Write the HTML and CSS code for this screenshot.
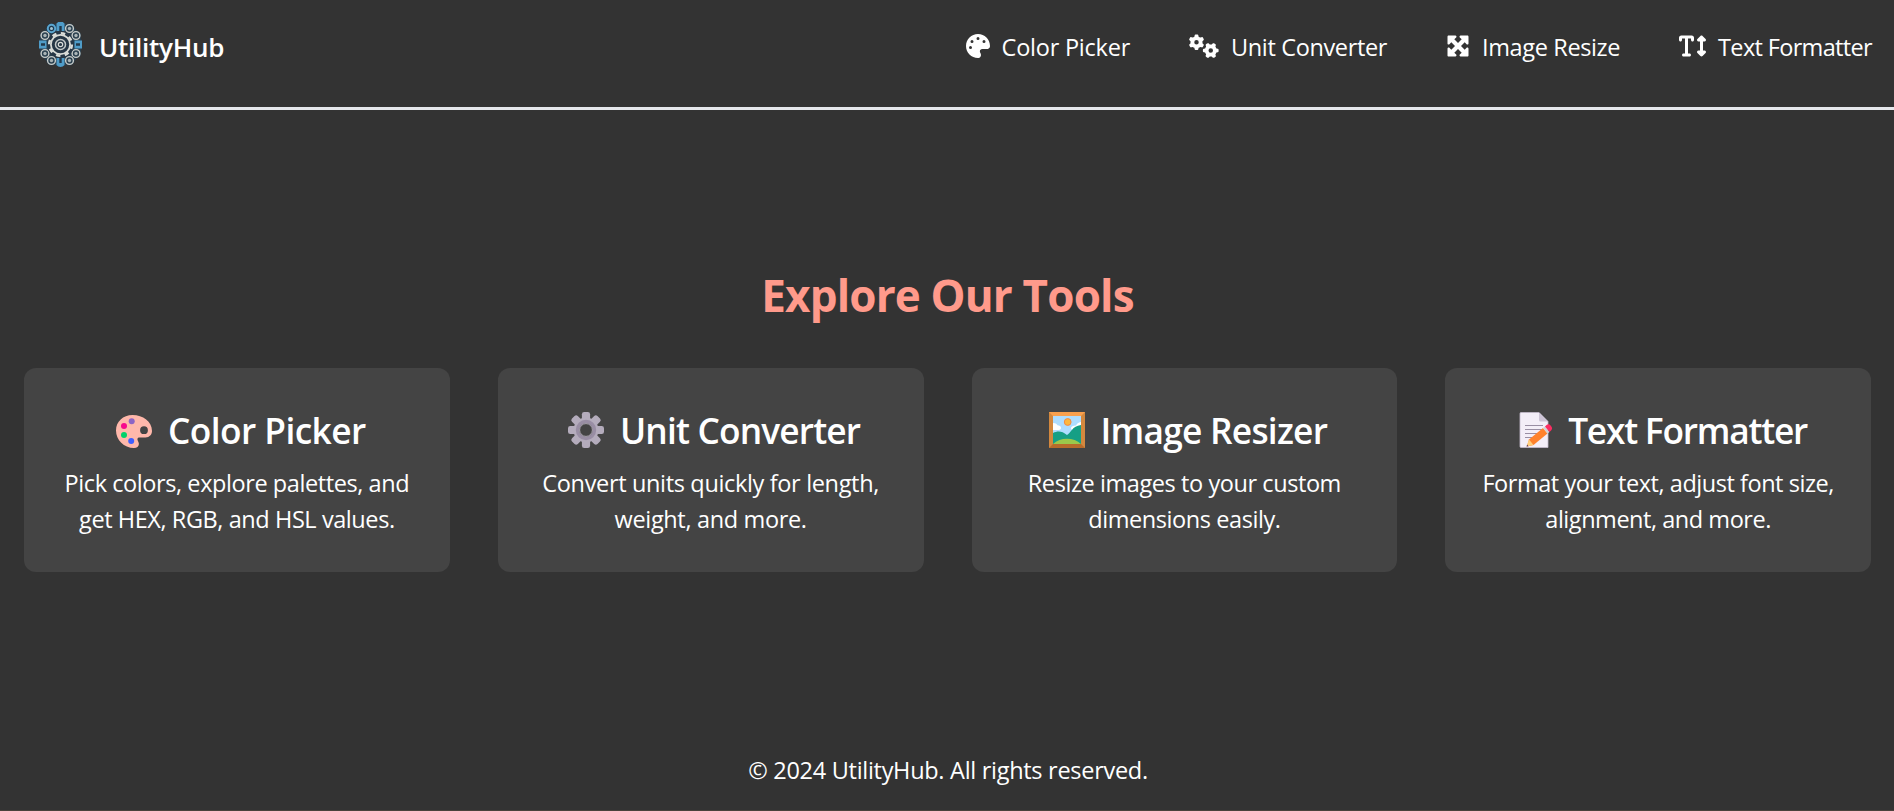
FILE: index.html
```html
<!DOCTYPE html>
<html lang="en">
<head>
<meta charset="utf-8">
<title>UtilityHub</title>
<link rel="stylesheet" href="styles.css">
</head>
<body>
<header class="header">
  <a class="brand">
    <svg class="logo" viewBox="0 0 45 45">
      <defs>
        <g id="cog"><circle r="5" fill="#2b4150"/><circle r="3.9" fill="none" stroke="#c9cdca" stroke-width="1.400"/><circle r="1.700" fill="#a9b4b6"/></g>
        <g id="bluecog"><circle r="5" fill="#1f3a50"/><circle r="3.700" fill="none" stroke="#5aa5cf" stroke-width="2"/><circle r="1.500" fill="#a5c4d2"/></g>
      </defs>
      <circle cx="22.500" cy="22.500" r="21.500" fill="#2a3f4e"/>
      <use href="#cog" x="31.500" y="6.500"/><use href="#cog" x="38" y="13.500"/>
      <use href="#cog" x="38" y="31.500"/><use href="#cog" x="31.500" y="38.500"/>
      <use href="#cog" x="13.500" y="38.500"/><use href="#cog" x="7" y="31.500"/>
      <use href="#cog" x="7" y="13.500"/><use href="#bluecog" x="13.500" y="6.500"/>
      <path d="M18.500 9V1.500a5 5 0 0 1 8 0V9zM18.500 36v7a5 5 0 0 0 8 0v-7zM1 18.500h7.500v8H1zM44 18.500h-7.500v8H44z" fill="#4f9cc8"/>
      <path d="M21.300 9V4h2.400v5zM21.300 36v5h2.400v-5zM3 21.300h4v2.400H3zM42 21.300h-4v2.400h4z" fill="#22384a"/>
      <circle cx="22.500" cy="22.500" r="13.500" fill="#263746"/>
      <circle cx="22.500" cy="22.500" r="11.300" fill="none" stroke="#d9dcd8" stroke-width="2.600" stroke-dasharray="4.400 4.475"/>
      <circle cx="22.500" cy="22.500" r="9.600" fill="none" stroke="#d9dcd8" stroke-width="1.800"/>
      <circle cx="22.500" cy="22.500" r="5" fill="none" stroke="#c3c9c8" stroke-width="1.500"/>
      <circle cx="22.500" cy="22.500" r="2.200" fill="none" stroke="#d9dcd8" stroke-width="1.200"/>
    </svg>
    <span class="brand-name">UtilityHub</span>
  </a>
  <nav class="nav">
    <a class="nav-item">
      <svg class="icon icon-palette" viewBox="0 0 512 512"><path d="M512 256c0 .9 0 1.800 0 2.700c-.4 36.500-33.600 61.300-70.100 61.300L344 320c-26.500 0-48 21.500-48 48c0 3.400 .4 6.700 1 9.900c2.100 10.200 6.500 20 10.800 29.900c6.100 13.800 12.100 27.500 12.100 42c0 31.800-21.600 60.700-53.400 62c-3.500 .1-7 .2-10.600 .2C114.600 512 0 397.400 0 256S114.600 0 256 0S512 114.600 512 256zM128 288a32 32 0 1 0 -64 0 32 32 0 1 0 64 0zm0-96a32 32 0 1 0 0-64 32 32 0 1 0 0 64zM288 96a32 32 0 1 0 -64 0 32 32 0 1 0 64 0zm96 96a32 32 0 1 0 0-64 32 32 0 1 0 0 64z"/></svg>
      <span class="label label-color">Color Picker</span>
    </a>
    <a class="nav-item">
      <svg class="icon icon-gears" viewBox="0 0 640 512">
        <defs><path id="gear" d="M308.500 135.300c7.100-6.300 9.900-16.200 6.200-25c-2.300-5.300-4.800-10.500-7.600-15.500L304 89.400c-3-5-6.300-9.900-9.800-14.600c-5.700-7.600-15.700-10.100-24.700-7.100l-28.200 9.300c-10.700-8.800-23-16-36.200-20.900L199 27.100c-1.900-9.300-9.100-16.700-18.500-17.800C173.900 8.400 167.200 8 160.400 8h-.7c-6.800 0-13.500 .4-20.100 1.200c-9.400 1.100-16.600 8.600-18.500 17.800L115 56.100c-13.300 5-25.500 12.100-36.200 20.900L50.500 67.800c-9-3-19-.5-24.700 7.100c-3.500 4.700-6.800 9.600-9.900 14.600l-3 5.300c-2.800 5-5.300 10.200-7.600 15.600c-3.700 8.700-.9 18.600 6.200 25l22.200 19.800C32.600 161.900 32 168.900 32 176s.6 14.100 1.700 20.900L11.500 216.700c-7.100 6.300-9.900 16.200-6.200 25c2.300 5.300 4.800 10.500 7.600 15.600l3 5.200c3 5.100 6.300 9.900 9.900 14.600c5.700 7.600 15.700 10.100 24.700 7.100l28.200-9.300c10.700 8.800 23 16 36.200 20.900l6.100 29.100c1.900 9.300 9.100 16.700 18.500 17.800c6.700 .8 13.500 1.200 20.400 1.200s13.700-.4 20.400-1.200c9.400-1.100 16.600-8.600 18.500-17.800l6.100-29.100c13.300-5 25.500-12.100 36.200-20.900l28.200 9.300c9 3 19 .5 24.700-7.100c3.500-4.700 6.800-9.500 9.800-14.600l3.100-5.400c2.800-5 5.300-10.200 7.600-15.500c3.700-8.700 .9-18.600-6.200-25l-22.200-19.800c1.100-6.800 1.700-13.800 1.700-20.900s-.6-14.100-1.700-20.900l22.200-19.800zM112 176a48 48 0 1 1 96 0 48 48 0 1 1 -96 0z"/></defs>
        <use href="#gear"/><use href="#gear" transform="translate(464 352) rotate(90) translate(-160 -176)"/>
      </svg>
      <span class="label label-unit">Unit Converter</span>
    </a>
    <a class="nav-item">
      <svg class="icon icon-expand" viewBox="0 0 512 512"><path d="M200 32H56C42.700 32 32 42.700 32 56V200c0 9.700 5.800 18.500 14.800 22.200s19.300 1.700 26.200-5.200l40-40 79 79-79 79L73 295c-6.900-6.900-17.200-8.900-26.200-5.200S32 302.300 32 312V456c0 13.300 10.700 24 24 24H200c9.700 0 18.500-5.800 22.200-14.800s1.700-19.300-5.200-26.200l-40-40 79-79 79 79-40 40c-6.900 6.900-8.900 17.200-5.200 26.200s12.500 14.800 22.200 14.800H456c13.300 0 24-10.700 24-24V312c0-9.700-5.800-18.500-14.800-22.200s-19.300-1.700-26.200 5.200l-40 40-79-79 79-79 40 40c6.900 6.900 17.200 8.900 26.200 5.200s14.800-12.500 14.800-22.200V56c0-13.300-10.700-24-24-24H312c-9.700 0-18.500 5.800-22.200 14.800s-1.700 19.300 5.200 26.200l40 40-79 79-79-79 40-40c6.900-6.900 8.900-17.200 5.200-26.200S209.700 32 200 32z"/></svg>
      <span class="label label-image">Image Resize</span>
    </a>
    <a class="nav-item">
      <svg class="icon icon-height" viewBox="0 0 576 512"><path d="M64 128V96h64l0 320H96c-17.700 0-32 14.300-32 32s14.300 32 32 32H224c17.700 0 32-14.300 32-32s-14.300-32-32-32H192V96l64 0v32c0 17.700 14.300 32 32 32s32-14.300 32-32V80c0-26.500-21.500-48-48-48H160 48C21.500 32 0 53.500 0 80v48c0 17.700 14.300 32 32 32s32-14.300 32-32zM502.600 41.400c-12.500-12.500-32.800-12.500-45.300 0l-64 64c-9.200 9.200-11.900 22.900-6.900 34.900s16.600 19.800 29.600 19.800h32V352H416c-12.900 0-24.600 7.800-29.600 19.800s-2.200 25.700 6.900 34.900l64 64c12.500 12.500 32.800 12.500 45.300 0l64-64c9.200-9.200 11.900-22.900 6.900-34.900s-16.600-19.800-29.600-19.800H512V160h32c12.900 0 24.600-7.800 29.600-19.800s2.200-25.700-6.900-34.900l-64-64z"/></svg>
      <span class="label label-text">Text Formatter</span>
    </a>
  </nav>
</header>
<main class="main">
  <h2 class="heading">Explore Our Tools</h2>
  <div class="grid">
    <section class="card card-color">
      <h3 class="card-title">
        <svg class="emoji" viewBox="0 0 36 36"><path fill-rule="evenodd" d="M16.500 3C7 3 0 9.500 0 18.500 0 28 8 36 18 36c3 0 4.700-1.500 4.900-4 .1-2-1.500-3.300-1.500-4.800 0-1.400 1-1.800 2.600-1.800h5.500c4 0 6.500-2.700 6.500-6.400C36 9.500 27 3 16.500 3zM28 14.300a3.900 3.900 0 1 1 0 7.800 3.900 3.900 0 0 1 0-7.800z" fill="#ffb8ab"/><circle cx="15.700" cy="9.200" r="3" fill="#8d65c5"/><circle cx="8" cy="14" r="3" fill="#f70a8d"/><circle cx="8" cy="23" r="3" fill="#00d26a"/><circle cx="15.200" cy="29" r="3" fill="#3f5fff"/></svg>
        <span class="title-text">Color Picker</span>
      </h3>
      <p class="desc">Pick colors, explore palettes, and<br>get HEX, RGB, and HSL values.</p>
    </section>
    <section class="card card-unit">
      <h3 class="card-title">
        <svg class="emoji" viewBox="0 0 36 36"><g fill="#b4acbc"><circle cx="18" cy="18" r="12.500"/><rect id="tooth" x="13.900" y="0" width="8.200" height="36" rx="2.300"/><use href="#tooth" transform="rotate(45 18 18)"/><use href="#tooth" transform="rotate(90 18 18)"/><use href="#tooth" transform="rotate(135 18 18)"/></g><circle cx="18" cy="18" r="8.500" fill="#444" stroke="#998ea4" stroke-width="3.400"/><circle cx="18" cy="18" r="6.400" fill="#444" stroke="#c3bbc9" stroke-width=".8"/></svg>
        <span class="title-text">Unit Converter</span>
      </h3>
      <p class="desc">Convert units quickly for length,<br>weight, and more.</p>
    </section>
    <section class="card card-image">
      <h3 class="card-title">
        <svg class="emoji" viewBox="0 0 36 36"><path d="M0 0h36v36H0z" fill="#d3883e"/><path d="M0 0h36l-4 4H4z" fill="#f9a04d"/><path d="M0 36h36l-4-4H4z" fill="#b76b2b"/><path d="M4 4h28v28H4z" fill="#aeddff"/><circle cx="18.700" cy="10" r="3.400" fill="#fcb73e" stroke="#f58a42" stroke-width="1"/><path d="M4 11c3 0 4 1 4.500 2.300 2 0 3.500 1 3.500 2.600 0 1.500-1.500 2.100-3 2.100H4zM32 10c-3 .5-4 2-5 3.400-3 0-5 1-5 2.600 0 1.500 1 2 3 2h7z" fill="#fff"/><path d="M4 21c5-2.500 9-2 14 2 4-2 5-9 14-10v19H4z" fill="#169f85"/><path d="M4 32c7-7 21-7 28 0z" fill="#9bc84b"/></svg>
        <span class="title-text">Image Resizer</span>
      </h3>
      <p class="desc">Resize images to your custom<br>dimensions easily.</p>
    </section>
    <section class="card card-text">
      <h3 class="card-title">
        <svg class="emoji" viewBox="0 0 36 36"><path d="M2 .5h18l9 9V35.500H2a1 1 0 0 1-1-1v-33a1 1 0 0 1 1-1z" fill="#f3eef8" stroke="#c4bbcd" stroke-width=".8"/><path d="M20 .5l9 9h-7.500a1.500 1.500 0 0 1-1.500-1.500z" fill="#cdc4d6"/><path d="M6 13.500h18M6 17.500h18M6 21.500h14M6 25.500h7" stroke="#998ea4" stroke-width="1.100"/><path d="M10 27.500L24 16l4.500 5.500L14.500 33 8 34.500z" fill="#ff822d"/><path d="M10 27.500l4.500 5.500L7.500 34.500z" fill="#ffce7c"/><path d="M8.200 32.600l1.300 1.600-2 .4z" fill="#533566"/><path d="M24 16l2-1.600 4.500 5.500-2 1.600z" fill="#d3d3d3"/><path d="M26 14.400l1.600-1.300c1.500-1.200 3-.9 4.200.7 1.500 1.700 1.800 3.300.3 4.700l-1.600 1.400z" fill="#fb2d62"/></svg>
        <span class="title-text">Text Formatter</span>
      </h3>
      <p class="desc">Format your text, adjust font size,<br>alignment, and more.</p>
    </section>
  </div>
</main>
<footer class="footer"><span>© 2024 UtilityHub. All rights reserved.</span></footer>
</body>
</html>
```
FILE: styles.css
```css
* { box-sizing: border-box; }
body {
  margin: 0;
  height: 811px;
  overflow: hidden;
  display: flex;
  flex-direction: column;
  background: #333;
  color: #fff;
  font: 23.5px/36px "Segoe UI", "Open Sans", "Noto Sans", sans-serif;
}
.header {
  height: 110px;
  border-bottom: 3px solid #e5e7eb;
  display: flex;
  justify-content: space-between;
  align-items: flex-start;
  padding: 22px 22px 0 38px;
}
.brand { display: flex; gap: 16px; }
.logo { width: 45px; height: 45px; }
.brand-name { font-size: 26px; font-weight: 600; padding-top: 7px; letter-spacing: -0.26px; }
.nav { display: flex; gap: 59px; padding-top: 7px; }
.nav-item { display: flex; gap: 12px; white-space: nowrap; }
.label-color { letter-spacing: -0.23px; }
.label-unit { letter-spacing: -0.36px; }
.label-image { letter-spacing: -0.37px; }
.label-text { letter-spacing: -0.66px; }
.icon { height: 24px; fill: #fff; margin-top: 5px; }
.icon-palette { width: 24px; }
.icon-gears { width: 30px; }
.icon-expand { width: 24px; }
.icon-height { width: 27px; }
.main { padding: 155px 23px 0 24px; flex: 1; }
.heading {
  margin: 0 0 43px;
  font-size: 44px;
  line-height: 60px;
  font-weight: 700;
  letter-spacing: -0.83px;
  text-align: center;
  color: #ff9a8b;
}
.grid { display: grid; grid-template-columns: repeat(4, 1fr); gap: 48px; }
.card {
  height: 204px;
  padding: 36px 0;
  border-radius: 12px;
  background: #444;
  text-align: center;
  white-space: nowrap;
}
.card-title {
  margin: 0 0 13px;
  height: 48px;
  display: flex;
  justify-content: center;
  font-size: 35.3px;
  line-height: 53px;
  font-weight: 600;
}
.card-color .title-text { letter-spacing: -0.58px; }
.card-unit .title-text { letter-spacing: -0.83px; }
.card-image .title-text { letter-spacing: -0.75px; }
.card-text .title-text { letter-spacing: -1.22px; }
.emoji { width: 36px; height: 36px; margin: 8px 16px 0 7px; }
.card-color .emoji { margin-left: 8px; }
.card-text .emoji { margin: 8px 13px 0 10px; }
.desc { margin: 0; letter-spacing: -0.42px; }
.card-unit .desc { letter-spacing: -0.34px; }
.card-text .desc { letter-spacing: -0.46px; }
.footer {
  height: 59px;
  padding-left: 2px;
  border-bottom: 1px solid #4a423c;
  text-align: center;
  letter-spacing: -0.29px;
}
```
